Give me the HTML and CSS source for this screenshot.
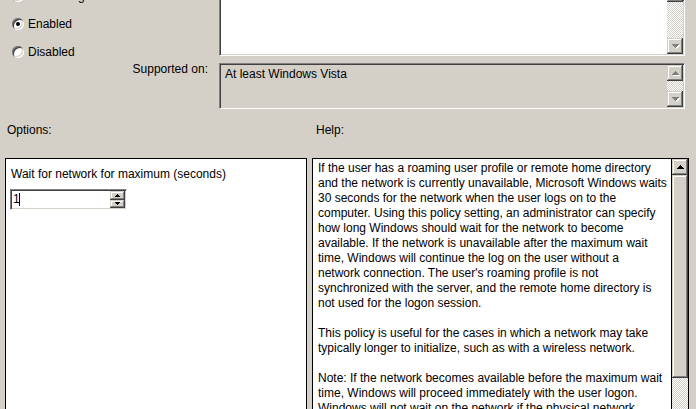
FILE: index.html
```html
<!DOCTYPE html>
<html>
<head>
<meta charset="utf-8">
<link rel="stylesheet" href="styles.css">
</head>
<body>
<div class="top">
  <div class="leftcol">
    <div class="radios">
      <div class="radio"><span class="rb"></span>Not Configured</div>
      <div class="radio"><span class="rb on"></span>Enabled</div>
      <div class="radio"><span class="rb"></span>Disabled</div>
    </div>
    <div class="sup-label">Supported on:</div>
  </div>
  <div class="rightcol">
    <div class="comment sunken">
      <div class="comment-text"></div>
      <div class="vscroll">
        <div class="sbtn clip"></div>
        <div class="track"></div>
        <div class="sbtn">
          <svg width="8" height="5" viewBox="0 0 8 5" shape-rendering="crispEdges"><g fill="#fff"><rect x="1" y="1" width="7" height="1"/><rect x="2" y="2" width="5" height="1"/><rect x="3" y="3" width="3" height="1"/><rect x="4" y="4" width="1" height="1"/></g><g fill="#808080"><rect x="0" y="0" width="7" height="1"/><rect x="1" y="1" width="5" height="1"/><rect x="2" y="2" width="3" height="1"/><rect x="3" y="3" width="1" height="1"/></g></svg>
        </div>
      </div>
    </div>
    <div class="supported sunken">
      <div class="sup-text">At least Windows Vista</div>
      <div class="vscroll">
        <div class="sbtn">
          <svg width="8" height="5" viewBox="0 0 8 5" shape-rendering="crispEdges"><g fill="#fff"><rect x="4" y="1" width="1" height="1"/><rect x="3" y="2" width="3" height="1"/><rect x="2" y="3" width="5" height="1"/><rect x="1" y="4" width="7" height="1"/></g><g fill="#808080"><rect x="3" y="0" width="1" height="1"/><rect x="2" y="1" width="3" height="1"/><rect x="1" y="2" width="5" height="1"/><rect x="0" y="3" width="7" height="1"/></g></svg>
        </div>
        <div class="track"></div>
        <div class="sbtn">
          <svg width="8" height="5" viewBox="0 0 8 5" shape-rendering="crispEdges"><g fill="#fff"><rect x="1" y="1" width="7" height="1"/><rect x="2" y="2" width="5" height="1"/><rect x="3" y="3" width="3" height="1"/><rect x="4" y="4" width="1" height="1"/></g><g fill="#808080"><rect x="0" y="0" width="7" height="1"/><rect x="1" y="1" width="5" height="1"/><rect x="2" y="2" width="3" height="1"/><rect x="3" y="3" width="1" height="1"/></g></svg>
        </div>
      </div>
    </div>
  </div>
</div>

<div class="bottom">
  <div class="lbl opt">Options:</div>
  <div class="lbl hlp">Help:</div>

  <div class="panel options">
    <div class="opt-label">Wait for network for maximum (seconds)</div>
    <div class="spin">
      <div class="spin-val">1<span class="caret"></span></div>
      <div class="spin-btns">
        <div class="spbtn">
          <svg width="5" height="3" viewBox="0 0 5 3" shape-rendering="crispEdges"><g fill="#000"><rect x="2" y="0" width="1" height="1"/><rect x="1" y="1" width="3" height="1"/><rect x="0" y="2" width="5" height="1"/></g></svg>
        </div>
        <div class="spbtn">
          <svg width="5" height="3" viewBox="0 0 5 3" shape-rendering="crispEdges"><g fill="#000"><rect x="0" y="0" width="5" height="1"/><rect x="1" y="1" width="3" height="1"/><rect x="2" y="2" width="1" height="1"/></g></svg>
        </div>
      </div>
    </div>
  </div>

  <div class="panel helpbox">
    <div class="help-text">
      <p>If the user has a roaming user profile or remote home directory<br>and the network is currently unavailable, Microsoft Windows waits<br>30 seconds for the network when the user logs on to the<br>computer. Using this policy setting, an administrator can specify<br>how long Windows should wait for the network to become<br>available. If the network is unavailable after the maximum wait<br>time, Windows will continue the log on the user without a<br>network connection. The user's roaming profile is not<br>synchronized with the server, and the remote home directory is<br>not used for the logon session.</p>
      <p>This policy is useful for the cases in which a network may take<br>typically longer to initialize, such as with a wireless network.</p>
      <p>Note: If the network becomes available before the maximum wait<br>time, Windows will proceed immediately with the user logon.<br>Windows will not wait on the network if the physical network<br>connection is not available.</p>
    </div>
    <div class="help-scroll">
      <div class="sbtn">
        <svg width="7" height="4" viewBox="0 0 7 4" shape-rendering="crispEdges"><g fill="#000"><rect x="3" y="0" width="1" height="1"/><rect x="2" y="1" width="3" height="1"/><rect x="1" y="2" width="5" height="1"/><rect x="0" y="3" width="7" height="1"/></g></svg>
      </div>
      <div class="thumb"></div>
      <div class="track"></div>
    </div>
  </div>
</div>
</body>
</html>
```

FILE: styles.css
```css
* { box-sizing: border-box; }

body {
  margin: 0;
  width: 696px;
  height: 409px;
  overflow: hidden;
  background: #d4d0c8;
  color: #000;
  font-family: "Liberation Sans", Arial, sans-serif;
  font-size: 12px;
  line-height: 15px;
}

.top {
  display: flex;
  height: 109px;
}

.leftcol {
  width: 219px;
  flex: none;
}

.radios {
  margin-top: -18px;
  padding-left: 12px;
}

.radio {
  display: flex;
  align-items: center;
  gap: 4px;
  height: 28px;
}

.rb {
  width: 12px;
  height: 12px;
  flex: none;
  border-radius: 50%;
  background: #fff;
  box-shadow: inset 1px 1px #808080, inset -1px -1px #fff, inset 2px 2px #404040, inset -2px -2px #d4d0c8;
  display: flex;
  align-items: center;
  justify-content: center;
}

.rb.on::after {
  content: "";
  width: 4px;
  height: 4px;
  border-radius: 50%;
  background: #000;
}

.sup-label {
  margin-top: -4px;
  text-align: right;
  padding-right: 11px;
}

.rightcol {
  width: 466px;
  flex: none;
  display: flex;
  flex-direction: column;
  gap: 7px;
}

.sunken {
  border: 1px solid;
  border-color: #808080 #fff #fff #808080;
  padding: 1px;
  box-shadow: inset 1px 1px #404040, inset -1px -1px #d4d0c8;
}

.comment {
  height: 56px;
  border-top: none;
  padding-top: 0;
  display: flex;
  overflow: hidden;
  background: #fff;
}

.comment-text {
  flex: 1;
  background: #fff;
}

.vscroll {
  width: 16px;
  flex: none;
  display: flex;
  flex-direction: column;
}

.track {
  flex: 1;
  background: repeating-conic-gradient(#d4d0c8 0 25%, #fff 0 50%) 0 0 / 2px 2px;
}

.sbtn {
  height: 16px;
  flex: none;
  background: #d4d0c8;
  box-shadow: inset -1px -1px #404040, inset 1px 1px #d4d0c8, inset -2px -2px #808080, inset 2px 2px #fff;
  display: flex;
  align-items: center;
  justify-content: center;
}

.sbtn svg {
  display: block;
  margin-left: 1px;
}

.sbtn.clip {
  margin-top: -14px;
}

.supported {
  height: 46px;
  display: flex;
  background: #d4d0c8;
}

.sup-text {
  flex: 1;
  padding: 2px 4px 0;
}

.bottom {
  display: grid;
  grid-template-columns: 302px 377px;
  column-gap: 5px;
  row-gap: 20px;
  padding-left: 5px;
  margin-top: 14px;
}

.lbl.opt { padding-left: 2px; }
.lbl.hlp { padding-left: 4px; }

.panel {
  border: 1px solid #000;
  background: #fff;
  height: 270px;
}

.options {
  padding: 8px 4px;
}

.opt-label {
  padding-left: 1px;
}

.spin {
  margin-top: 7px;
  width: 117px;
  height: 21px;
  border: 1px solid;
  border-color: #808080 #fff #fff #808080;
  padding: 1px;
  box-shadow: inset 1px 1px #404040, inset -1px -1px #d4d0c8;
  display: flex;
  background: #fff;
}

.spin-val {
  flex: 1;
  display: flex;
  align-items: center;
  padding-left: 1px;
}

.caret {
  width: 1px;
  height: 13px;
  background: #000;
  margin-left: -1px;
}

.spin-btns {
  width: 15px;
  flex: none;
  display: flex;
  flex-direction: column;
}

.spbtn {
  flex: 1;
  background: #d4d0c8;
  box-shadow: inset -1px -1px #404040, inset 1px 1px #d4d0c8, inset -2px -2px #808080, inset 2px 2px #fff;
  display: flex;
  align-items: center;
  justify-content: center;
}

.spbtn svg { display: block; }

.helpbox {
  display: flex;
}

.help-text {
  flex: 1;
  min-width: 0;
  border-right: 1px solid #000;
  padding: 2px 0 0 5px;
  white-space: nowrap;
  overflow: hidden;
}

.help-text p {
  margin: 0 0 15px;
}

.help-scroll {
  width: 16px;
  flex: none;
  display: flex;
  flex-direction: column;
}

.thumb {
  height: 203px;
  flex: none;
  background: #d4d0c8;
  box-shadow: inset -1px -1px #404040, inset 1px 1px #d4d0c8, inset -2px -2px #808080, inset 2px 2px #fff;
}
```
